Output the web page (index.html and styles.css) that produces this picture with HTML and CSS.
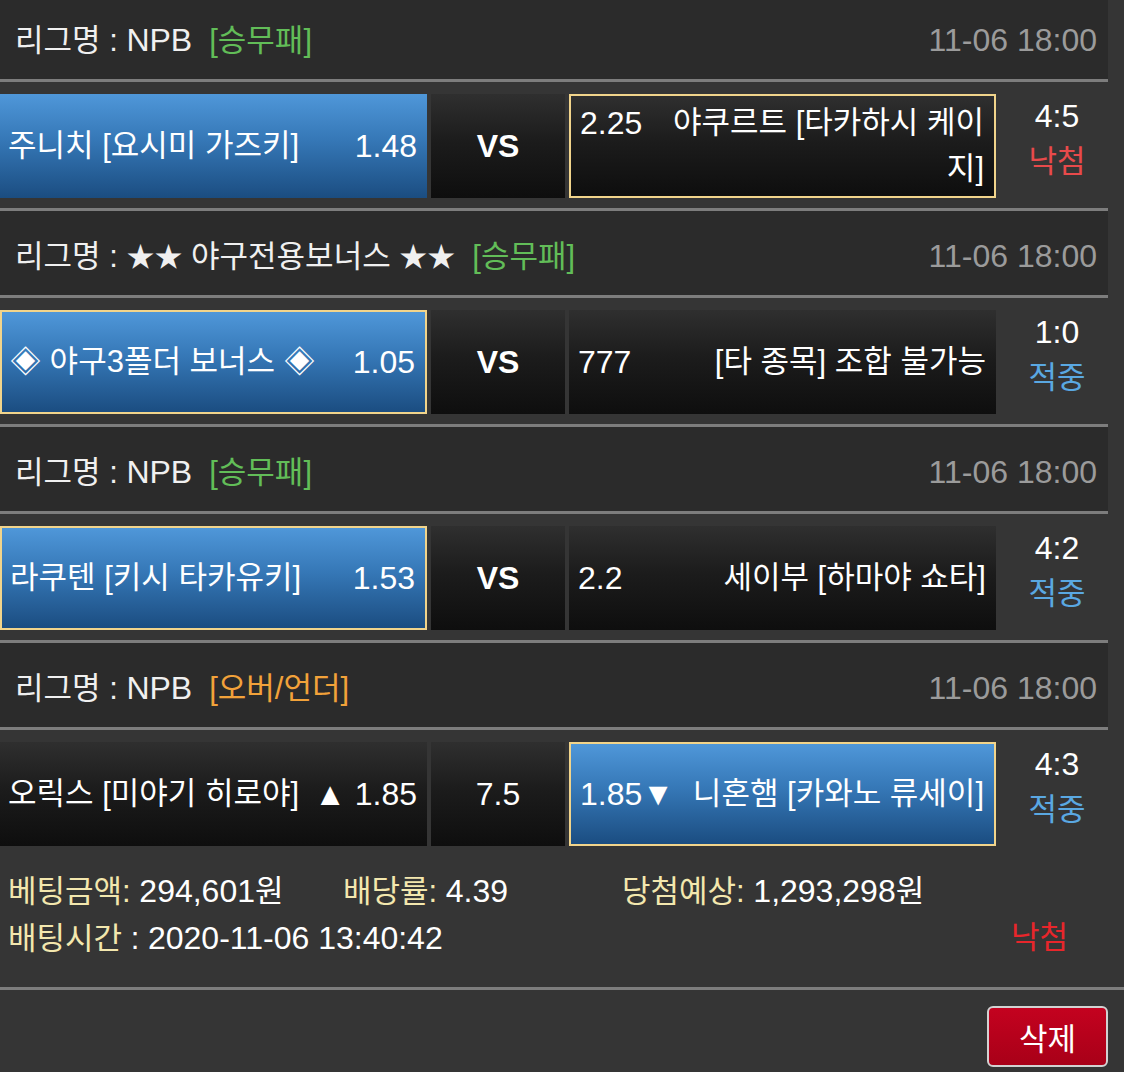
FILE: index.html
```html
<!DOCTYPE html>
<html lang="ko">
<head>
<meta charset="utf-8">
<title>베팅내역</title>
<link rel="stylesheet" href="styles.css">
</head>
<body>
<div class="list">
  <section class="game">
    <div class="league">
      <div class="league-name">리그명 : <span class="en">NPB</span><span class="tag green">[승무패]</span></div>
      <div class="date">11-06 18:00</div>
    </div>
    <div class="match">
      <div class="cell home picked">
        <span class="team">주니치 [요시미 가즈키]</span>
        <span class="odds">1.48</span>
      </div>
      <div class="cell mid"><span class="vs">VS</span></div>
      <div class="cell away win">
        <div class="away-inner"><span class="odds">2.25</span>야쿠르트 [타카하시 케이지]</div>
      </div>
      <div class="result"><span class="score">4:5</span><span class="lose">낙첨</span></div>
    </div>
  </section>

  <section class="game">
    <div class="league">
      <div class="league-name">리그명 : <span class="stars">★★</span> 야구전용보너스 <span class="stars">★★</span><span class="tag green">[승무패]</span></div>
      <div class="date">11-06 18:00</div>
    </div>
    <div class="match">
      <div class="cell home picked win">
        <span class="team">◈ 야구3폴더 보너스 ◈</span>
        <span class="odds">1.05</span>
      </div>
      <div class="cell mid"><span class="vs">VS</span></div>
      <div class="cell away">
        <div class="away-inner"><span class="odds">777</span>[타 종목] 조합 불가능</div>
      </div>
      <div class="result"><span class="score">1:0</span><span class="hit">적중</span></div>
    </div>
  </section>

  <section class="game">
    <div class="league">
      <div class="league-name">리그명 : <span class="en">NPB</span><span class="tag green">[승무패]</span></div>
      <div class="date">11-06 18:00</div>
    </div>
    <div class="match">
      <div class="cell home picked win">
        <span class="team">라쿠텐 [키시 타카유키]</span>
        <span class="odds">1.53</span>
      </div>
      <div class="cell mid"><span class="vs">VS</span></div>
      <div class="cell away">
        <div class="away-inner"><span class="odds">2.2</span>세이부 [하마야 쇼타]</div>
      </div>
      <div class="result"><span class="score">4:2</span><span class="hit">적중</span></div>
    </div>
  </section>

  <section class="game">
    <div class="league">
      <div class="league-name">리그명 : <span class="en">NPB</span><span class="tag orange">[오버/언더]</span></div>
      <div class="date">11-06 18:00</div>
    </div>
    <div class="match">
      <div class="cell home">
        <span class="team">오릭스 [미야기 히로야]</span>
        <span class="odds">▲ 1.85</span>
      </div>
      <div class="cell mid"><span class="line">7.5</span></div>
      <div class="cell away picked win">
        <div class="away-inner"><span class="odds">1.85▼</span>니혼햄 [카와노 류세이]</div>
      </div>
      <div class="result"><span class="score">4:3</span><span class="hit">적중</span></div>
    </div>
  </section>
</div>

<div class="summary">
  <div class="sum-row cols">
    <div><span class="lbl">베팅금액:</span> <span class="en">294,601</span>원</div>
    <div><span class="lbl">배당률:</span> <span class="en">4.39</span></div>
    <div><span class="lbl">당첨예상:</span> <span class="en">1,293,298</span>원</div>
  </div>
  <div class="sum-row split">
    <div><span class="lbl">배팅시간</span> : <span class="en">2020-11-06 13:40:42</span></div>
    <span class="lose-strong">낙첨</span>
  </div>
</div>

<div class="actions">
  <button class="del" type="button">삭제</button>
</div>
</body>
</html>
```

FILE: styles.css
```css
html, body {
  margin: 0;
  padding: 0;
}

body {
  background: #353535;
  color: #ffffff;
  font-family: "Liberation Sans", "Noto Sans CJK KR", sans-serif;
  font-size: 31px;
  height: 1072px;
  overflow: hidden;
}

.list {
  width: 1108px;
  margin-top: -8px;
}

.en,
.odds,
.date,
.score,
.vs,
.line {
  font-size: 32px;
}

.league {
  display: flex;
  justify-content: space-between;
  align-items: center;
  height: 84px;
  padding: 0 11px 0 15px;
  background: #2b2b2b;
  border-top: 3px solid #7d7d7d;
  border-bottom: 3px solid #7d7d7d;
  color: #f0f0f0;
}

.stars {
  font-size: 28px;
}

.tag {
  margin-left: 17px;
}

.green {
  color: #62bd58;
}

.orange {
  color: #f2a23a;
}

.date {
  color: #9b9b9b;
  padding-top: 6px;
}

.match {
  display: grid;
  grid-template-columns: 427px 134px 427px 1fr;
  grid-template-rows: 104px;
  column-gap: 4px;
  padding: 12px 0 10px;
}

.cell {
  box-sizing: border-box;
  height: 104px;
  display: flex;
  align-items: center;
  line-height: 46px;
  background: linear-gradient(to bottom, #2f2f2f 0%, #1c1c1c 45%, #0e0e0e 100%);
  color: #ffffff;
}

.cell.picked {
  background: linear-gradient(to bottom, #4f97d9 0%, #3577b6 45%, #1b4d81 100%);
}

.cell.win {
  border: 2px solid #f1d48b;
}

.home {
  justify-content: space-between;
  padding: 0 10px 0 8px;
}

.mid {
  justify-content: center;
}

.vs {
  font-weight: bold;
}

.away {
  padding: 0 10px 0 9px;
}

.away-inner {
  width: 100%;
  text-align: right;
}

.away-inner .odds {
  float: left;
  margin-right: 12px;
}

.result {
  box-sizing: border-box;
  height: 104px;
  display: flex;
  flex-direction: column;
  align-items: center;
  justify-content: center;
  line-height: 46px;
  padding: 0 0 14px 6px;
}

.lose {
  color: #e84a4b;
}

.hit {
  color: #5aa8e2;
}

.summary {
  padding: 12px 56px 25px 8px;
  line-height: 46px;
  border-bottom: 3px solid #7d7d7d;
}

.sum-row.cols {
  display: grid;
  grid-template-columns: 335px 279px auto;
}

.sum-row.split {
  display: flex;
  justify-content: space-between;
}

.lbl {
  color: #f3e7ae;
}

.lose-strong {
  color: #e8262b;
}

.actions {
  display: flex;
  justify-content: flex-end;
  padding: 16px 16px 0;
}

.del {
  width: 121px;
  height: 61px;
  border: 2px solid #d2d2d2;
  border-radius: 6px;
  background: linear-gradient(to bottom, #c4021f 0%, #a80018 100%);
  color: #ffffff;
  font-family: "Liberation Sans", "Noto Sans CJK KR", sans-serif;
  font-size: 31px;
  padding: 0;
}
```
